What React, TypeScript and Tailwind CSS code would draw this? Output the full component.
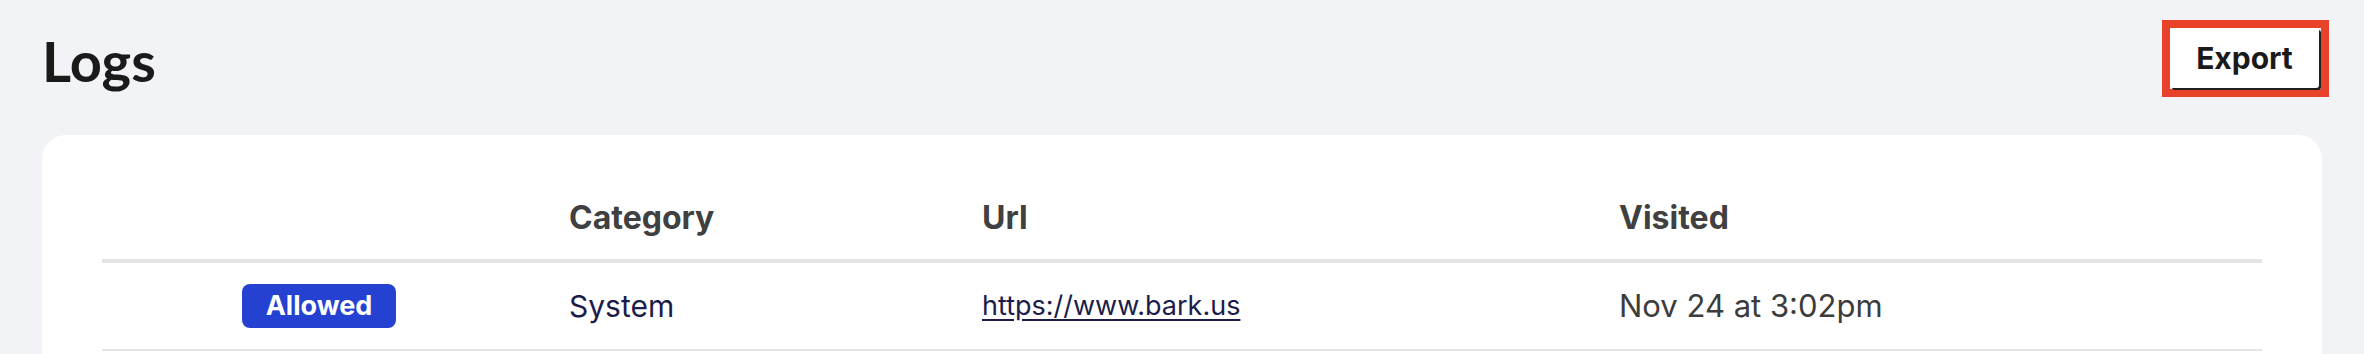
const logs = [
  {
    status: 'Allowed',
    category: 'System',
    url: 'https://www.bark.us',
    visited: 'Nov 24 at 3:02pm',
  },
];

const App = () => {
  return (
    <div className="min-h-screen bg-[#f2f3f7] px-[42px] font-['Inter',sans-serif]">
      {/* Page header */}
      <div className="flex items-center justify-between pt-[20px] pb-[38px]">
        <h1 className="font-['Lato',sans-serif] text-[56px] font-bold leading-none text-[#1a1a1a] mt-[4px]">
          Logs
        </h1>
        <div className="-mr-[7px] border-8 border-[#e8432a] pr-[2px] pb-[1px]">
          <button className="flex h-[60px] w-[149px] items-center justify-center rounded-[3px] bg-white text-[30px] font-bold text-[#1a1a1a] shadow-[2px_2px_0_#1f1f1f]">
            Export
          </button>
        </div>
      </div>

      {/* Logs table */}
      <div className="rounded-[24px] bg-white px-[60px] pt-[38px] pb-[40px]">
        <div className="grid grid-cols-[434px_413px_637px_1fr] border-b-4 border-[#e4e4e4] h-[90px] items-center pt-[4px]">
          <div />
          <div className="px-[33px] text-[32px] font-bold text-[#404040]">Category</div>
          <div className="px-[33px] text-[32px] font-bold text-[#404040]">Url</div>
          <div className="px-[33px] text-[32px] font-bold text-[#404040]">Visited</div>
        </div>
        {logs.map((log) => (
          <div
            key={log.url}
            className="grid grid-cols-[434px_413px_637px_1fr] border-b-2 border-[#e4e4e4] h-[88px] items-center"
          >
            <div className="flex justify-center px-[33px]">
              <span className="flex h-[44px] w-[154px] items-center justify-center rounded-[8px] bg-[#2541d1] text-[27px] font-bold text-white">
                {log.status}
              </span>
            </div>
            <div className="px-[33px] text-[30px] text-[#1c1c4a]">{log.category}</div>
            <div className="px-[33px]">
              <a href="#" className="text-[27px] text-[#1c1c4a] underline underline-offset-[4px]">
                {log.url}
              </a>
            </div>
            <div className="px-[33px] text-[31px] text-[#3c3c3c]">{log.visited}</div>
          </div>
        ))}
      </div>
    </div>
  );
};

export default App;
